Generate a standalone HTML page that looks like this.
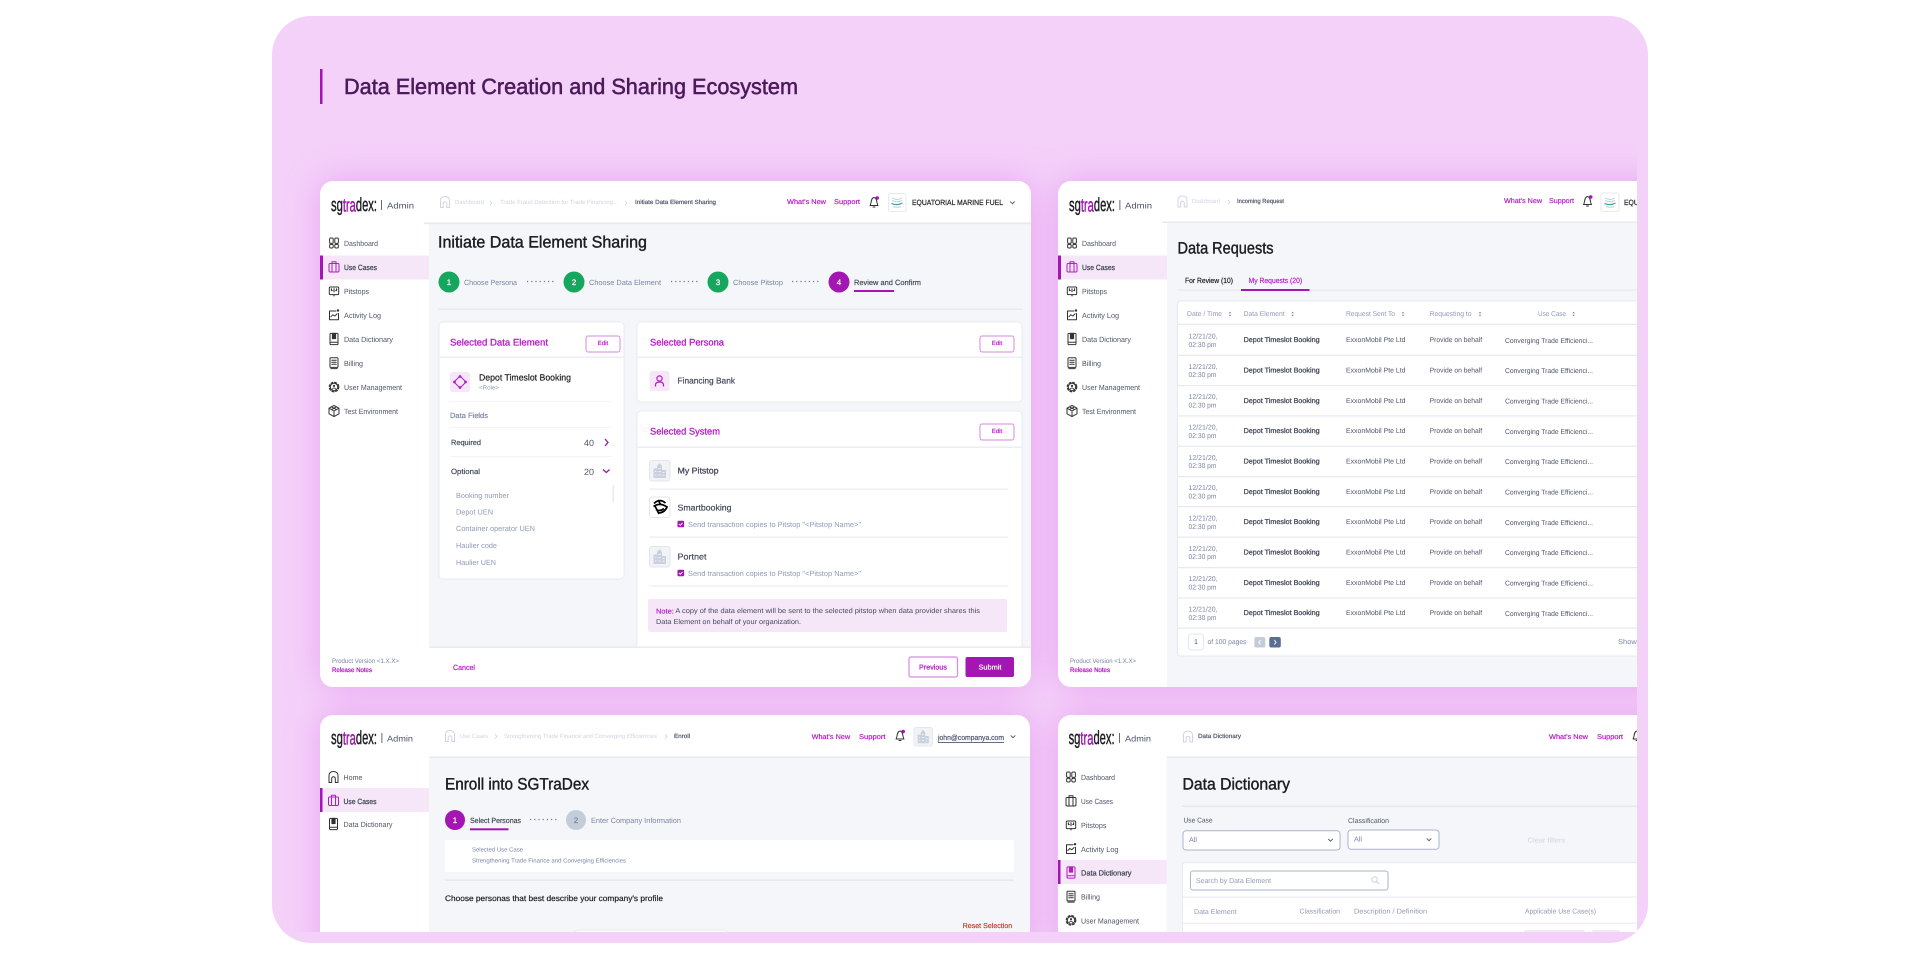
<!DOCTYPE html>
<html lang="en"><head><meta charset="utf-8"><title>Data Element Creation and Sharing Ecosystem</title>
<style>
html,body{margin:0;padding:0;background:#fff;width:1920px;height:959px;overflow:hidden}
svg{display:block}
text{font-family:"Liberation Sans",sans-serif;dominant-baseline:central;white-space:pre;stroke-width:0;transform:translateY(.6px);text-rendering:geometricPrecision}
.m{stroke-width:.2}
.b{stroke-width:.28}
.f16.m{stroke-width:.42}
.f95.m{stroke-width:.3;transform:translateY(1px)}
.lg{stroke-width:.45}
.lg tspan{stroke:#a313b2}
.p{fill:#b41cc4;stroke:#b41cc4}
.k{fill:#1c1c22;stroke:#1c1c22}
.d{fill:#444a5a;stroke:#444a5a}
.g{fill:#7a85a3;stroke:#7a85a3}
.l{fill:#8f9ab5;stroke:#8f9ab5}
.c{fill:#cfd5e2;stroke:#cfd5e2}
.s{fill:#4e5568;stroke:#4e5568}
.w{fill:#fff;stroke:#fff}
.f6{font-size:6px}.f65{font-size:6.5px}.f7{font-size:7px}.f75{font-size:7.5px}.f8{font-size:8px}.f85{font-size:8.5px}.f9{font-size:9px}.f95{font-size:9.5px}.f16{font-size:16.5px}
.ic{fill:none;stroke:currentColor;stroke-width:1;stroke-linejoin:round;stroke-linecap:round}
</style></head><body>
<svg width="1920" height="959" viewBox="0 0 1920 959" xmlns="http://www.w3.org/2000/svg">
<defs>
<filter id="sh" x="-20%" y="-20%" width="140%" height="140%"><feGaussianBlur stdDeviation="17"/></filter>
<filter id="bl" x="0" y="0" width="100%" height="100%"><feGaussianBlur stdDeviation="0.38"/></filter>
<clipPath id="ca"><path d="M310 16H1637V932H272V54A38 38 0 0 1 310 16Z"/></clipPath>
<clipPath id="c1"><rect x="320" y="181" width="711" height="506" rx="13"/></clipPath>
<clipPath id="c2"><rect x="1058" y="181" width="700" height="506" rx="13"/></clipPath>
<clipPath id="c3"><rect x="320" y="715" width="710" height="240" rx="13"/></clipPath>
<clipPath id="c4"><rect x="1058" y="715" width="700" height="240" rx="13"/></clipPath>
<g id="dash" class="ic"><rect x="-4.4" y="-5" width="3.6" height="5.4" rx="1.2"/><rect x=".8" y="-5" width="3.6" height="5.4" rx="1.2"/><rect x="-4.4" y="1.4" width="3.6" height="3.6" rx="1.2"/><rect x=".8" y="1.4" width="3.6" height="3.6" rx="1.2"/></g>
<g id="case" class="ic"><rect x="-5" y="-3.5" width="10" height="8.5" rx="1.2"/><path d="M-2 -3.5V5M2 -3.5V5M-2 -3.5V-5.2H2V-3.5"/></g>
<g id="pit" class="ic"><rect x="-4.7" y="-4" width="9.4" height="7.6" rx="1"/><path d="M-2.6 -2.2V-.4H-1.8M2.6 -2.2V-.4H1.8M0 -2.2V.8M0 3.6V5" stroke-width="1.1"/></g>
<g id="log" class="ic"><path d="M2 -4H-4.5V4.8H4.5V-1.5"/><path d="M-3.2 1.8L-1.2 -.2L.8 1L3.2 -1.2"/><circle cx="4" cy="-4.5" r="1.2" fill="currentColor" stroke="none"/></g>
<g id="dict" class="ic"><rect x="-4" y="-5.6" width="8" height="11.2" rx="1"/><path d="M-4 3.2H4"/><rect x="-1.6" y="-5.6" width="3.2" height="5.2" fill="currentColor"/></g>
<g id="bill" class="ic"><rect x="-4" y="-5.2" width="8" height="9.6" rx=".8"/><path d="M-2.2 -2.8H2.2M-2.2 -.8H2.2M-2.2 1.2H2.2M-3.2 5.6H3.2"/></g>
<g id="user" class="ic"><circle r="3.7" stroke-width="1"/><circle r="4.7" stroke-width="1.3" stroke-dasharray="1.8 2"/><circle cy="-1.1" r="1.1" fill="currentColor" stroke="none"/><path d="M-1.8 2.2Q0 -.4 1.8 2.2" stroke-width=".9"/></g>
<g id="test" class="ic" stroke-width="1.15"><path d="M0 -5.6L5 -2.8V2.8L0 5.6L-5 2.8V-2.8Z M-5 -2.8L0 0L5 -2.8M0 0V5.6M-2.5 -4.2L2.5 -1.4M2.5 -4.2L-2.5 -1.4"/></g>
<g id="home" class="ic"><path d="M-4.5 5.5V-1Q-4.5 -5.5 0 -5.5Q4.5 -5.5 4.5 -1V5.5H1.8V1.5A1.8 1.8 0 0 0 -1.8 1.5V5.5Z"/></g>
<g id="bell" class="ic"><path d="M-4 3.5C-2.5 2 -3.5 -4 0 -4.5C3.5 -4 2.5 2 4 3.5Z"/><path d="M-1 5H1"/><circle cx="3.2" cy="-4" r="1.8" fill="#a313b2" stroke="none"/></g>
<g id="bld"><rect x="-10" y="-10" width="20.5" height="20.5" rx="2.5" fill="#f1f3f7" stroke="#e3e6ee"/><path d="M-6 7.5V-2H-2.5V-4.5L0 -7.5L2.5 -4.5V-.5H6.5V7.5Z" fill="#c9d1df"/><path d="M-4.5 1H-3M-1 1H1M3 2H5M-4.5 4.5H-3M-1 4.5H1M3 4.8H5M-1 -2H1" stroke="#f1f3f7"/></g>
<g id="edit"><rect x="0" y="0" width="34" height="16" rx="2" fill="#fff" stroke="#d98ae4" stroke-width="1"/></g>
<g id="sort"><path d="M-1.3 -.7L0 -2.4L1.3 -.7ZM-1.3 .7L0 2.4L1.3 .7Z" fill="#7a85a3"/></g>
<g id="chev"><path d="M-2.3 -1.1L0 1.2L2.3 -1.1" fill="none" stroke="#555" stroke-width=".9"/></g>
<g id="crumb"><path d="M-1 -2.2L1 0L-1 2.2" fill="none" stroke="#c3cadb" stroke-width=".7"/></g>
<g id="chk"><rect x="0" y="-3.3" width="6.6" height="6.6" rx="1" fill="#a313b2"/><path d="M1.5 0L2.8 1.3L5.1 -1.1" fill="none" stroke="#fff" stroke-width=".9"/></g>
</defs>

<rect width="1920" height="959" fill="#fff"/>
<rect x="272" y="16" width="1376" height="927" rx="39" fill="#f4d1f9"/>
<rect x="320" y="69" width="2.5" height="35" fill="#a313b2"/>
<text x="344" y="86" font-size="22" fill="#4b1a5b" stroke="#4b1a5b" style="stroke-width:.55" textLength="454" lengthAdjust="spacingAndGlyphs">Data Element Creation and Sharing Ecosystem</text>

<g clip-path="url(#ca)">
<g filter="url(#sh)" fill="#df7fee" opacity=".55">
<rect x="320" y="181" width="711" height="506" rx="13"/>
<rect x="1058" y="181" width="700" height="506" rx="13"/>
<rect x="320" y="715" width="710" height="240" rx="13"/>
<rect x="1058" y="715" width="700" height="240" rx="13"/>
</g>

<g filter="url(#bl)">
<!-- CARD 1 -->
<g clip-path="url(#c1)">
<rect x="320" y="181" width="711" height="506" fill="#fff"/>
<rect x="429" y="224" width="602" height="424" fill="#f5f6f9"/>
<rect x="424" y="222.5" width="607" height="1.6" fill="#e6e9f0"/>
<text x="331" y="205" font-size="19" class="k lg" textLength="46" lengthAdjust="spacingAndGlyphs">sg<tspan fill="#a313b2">tra</tspan>dex:</text>
<rect x="381" y="200" width=".8" height="10" fill="#444"/>
<text x="387" y="205" class="f85 s" textLength="27" lengthAdjust="spacingAndGlyphs">Admin</text>
<rect x="320" y="255.5" width="109" height="24" fill="#f5e6f8"/><rect x="320" y="255.5" width="3" height="24" fill="#a313b2"/>
<use href="#dash" x="334" y="243" color="#333"/><text x="344" y="243" class="f75 s" textLength="34" lengthAdjust="spacingAndGlyphs">Dashboard</text>
<use href="#case" x="334" y="267" color="#b41cc4"/><text x="344" y="267" class="f75 d b" textLength="33" lengthAdjust="spacingAndGlyphs">Use Cases</text>
<use href="#pit" x="334" y="291" color="#333"/><text x="344" y="291" class="f75 s" textLength="25" lengthAdjust="spacingAndGlyphs">Pitstops</text>
<use href="#log" x="334" y="315" color="#333"/><text x="344" y="315" class="f75 s" textLength="37" lengthAdjust="spacingAndGlyphs">Activity Log</text>
<use href="#dict" x="334" y="339" color="#333"/><text x="344" y="339" class="f75 s" textLength="49" lengthAdjust="spacingAndGlyphs">Data Dictionary</text>
<use href="#bill" x="334" y="363" color="#333"/><text x="344" y="363" class="f75 s" textLength="19" lengthAdjust="spacingAndGlyphs">Billing</text>
<use href="#user" x="334" y="387" color="#333"/><text x="344" y="387" class="f75 s" textLength="58" lengthAdjust="spacingAndGlyphs">User Management</text>
<use href="#test" x="334" y="411" color="#333"/><text x="344" y="411" class="f75 s" textLength="54" lengthAdjust="spacingAndGlyphs">Test Environment</text>
<text x="332" y="661" class="f65 g" textLength="67" lengthAdjust="spacingAndGlyphs">Product Version &lt;1.X.X&gt;</text>
<text x="332" y="670" class="f65 p b" textLength="40" lengthAdjust="spacingAndGlyphs">Release Notes</text>

<use href="#home" x="445" y="202" color="#cfd5e2"/>
<text x="455" y="202.5" class="f6 c" textLength="29" lengthAdjust="spacingAndGlyphs">Dashboard</text><use href="#crumb" x="491" y="203"/>
<text x="500" y="202.5" class="f6 c" textLength="118" lengthAdjust="spacingAndGlyphs">Trade Fraud Detection for Trade Financing...</text><use href="#crumb" x="626" y="203"/>
<text x="635" y="202.5" class="f6 s m" textLength="81" lengthAdjust="spacingAndGlyphs">Initiate Data Element Sharing</text>
<text x="787" y="202" class="f7 p m" textLength="39" lengthAdjust="spacingAndGlyphs">What's New</text>
<text x="834" y="202" class="f7 p m" textLength="26" lengthAdjust="spacingAndGlyphs">Support</text>
<use href="#bell" x="874" y="202" color="#333"/>
<rect x="888.5" y="193.5" width="17.5" height="18" rx="2" fill="#fff" stroke="#e6e9f0"/>
<path d="M892 198Q897 201 902 198M892 200.5Q897 203 902 200.5" stroke="#c9cfd8" fill="none"/><path d="M891.5 203.5Q897 206 902.5 203" stroke="#2aa6a8" fill="none" stroke-width="1.2"/><path d="M893 206.5Q897 208 901 206.5" stroke="#c9cfd8" fill="none"/>
<text x="912" y="202" class="f75 k m" textLength="91" lengthAdjust="spacingAndGlyphs">EQUATORIAL MARINE FUEL</text>
<use href="#chev" x="1012.5" y="202.5"/>

<text x="438" y="242" class="f16 k m" textLength="209" lengthAdjust="spacingAndGlyphs">Initiate Data Element Sharing</text>
<circle cx="449" cy="282" r="10.5" fill="#12a75f"/><text x="449" y="282" text-anchor="middle" class="f8 w m">1</text>
<text x="464" y="282" class="f75 g" textLength="53" lengthAdjust="spacingAndGlyphs">Choose Persona</text>
<path d="M527 281.5H556" stroke="#67749a" stroke-width="1.2" stroke-dasharray="1.2 3"/>
<circle cx="574" cy="282" r="10.5" fill="#12a75f"/><text x="574" y="282" text-anchor="middle" class="f8 w m">2</text>
<text x="589" y="282" class="f75 g" textLength="72" lengthAdjust="spacingAndGlyphs">Choose Data Element</text>
<path d="M671 281.5H700" stroke="#67749a" stroke-width="1.2" stroke-dasharray="1.2 3"/>
<circle cx="718" cy="282" r="10.5" fill="#12a75f"/><text x="718" y="282" text-anchor="middle" class="f8 w m">3</text>
<text x="733" y="282" class="f75 g" textLength="50" lengthAdjust="spacingAndGlyphs">Choose Pitstop</text>
<path d="M792 281.5H821" stroke="#67749a" stroke-width="1.2" stroke-dasharray="1.2 3"/>
<circle cx="839" cy="282" r="10.5" fill="#a313b2"/><text x="839" y="282" text-anchor="middle" class="f8 w m">4</text>
<text x="854" y="282" class="f75 d m" textLength="67" lengthAdjust="spacingAndGlyphs">Review and Confirm</text>
<rect x="854" y="290" width="40" height="2" fill="#a313b2"/>
<rect x="438" y="308.5" width="585" height="1.4" fill="#e6e9ef"/>

<!-- left panel -->
<rect x="439" y="322" width="185" height="257" rx="4" fill="#fff" stroke="#e8ebf1"/>
<text x="450" y="342" class="f95 p m" textLength="98" lengthAdjust="spacingAndGlyphs">Selected Data Element</text>
<use href="#edit" x="586" y="336"/><text x="603" y="343.5" text-anchor="middle" class="f6 p m">Edit</text>
<rect x="439" y="356.5" width="185" height="1.6" fill="#eceef3"/>
<rect x="450" y="372" width="20" height="20" rx="3" fill="#f5e6f8"/>
<path d="M460 376L466 382L460 388L454 382Z" fill="none" stroke="#b41cc4" stroke-width="1"/><circle cx="460" cy="376.5" r="1.4" fill="#b41cc4"/><circle cx="460" cy="387.5" r="1.4" fill="#b41cc4"/><circle cx="454.5" cy="382" r="1.4" fill="#b41cc4"/><circle cx="465.5" cy="382" r="1.4" fill="#b41cc4"/>
<text x="479" y="377" class="f9 k m" textLength="92" lengthAdjust="spacingAndGlyphs">Depot Timeslot Booking</text>
<text x="479" y="388" class="f6 l" textLength="20" lengthAdjust="spacingAndGlyphs">&lt;Role&gt;</text>
<rect x="450" y="401" width="162" height="1" fill="#f3f4f8"/>
<text x="450" y="415" class="f75 g m" textLength="38" lengthAdjust="spacingAndGlyphs">Data Fields</text>
<rect x="450" y="427" width="162" height="1" fill="#f3f4f8"/>
<text x="451" y="442" class="f75 d m" textLength="30" lengthAdjust="spacingAndGlyphs">Required</text>
<text x="584" y="442.5" class="f9 s" textLength="10" lengthAdjust="spacingAndGlyphs">40</text>
<path d="M605 439L608 442.5L605 446" fill="none" stroke="#a313b2" stroke-width="1.3"/>
<rect x="450" y="456" width="162" height="1" fill="#f3f4f8"/>
<text x="451" y="471" class="f75 d m" textLength="29" lengthAdjust="spacingAndGlyphs">Optional</text>
<text x="584" y="471.5" class="f9 s" textLength="10" lengthAdjust="spacingAndGlyphs">20</text>
<path d="M603 469.5L606.3 472.5L609.5 469.5" fill="none" stroke="#a313b2" stroke-width="1.3"/>
<text x="456" y="495" class="f75 l" textLength="53" lengthAdjust="spacingAndGlyphs">Booking number</text>
<text x="456" y="511.5" class="f75 l" textLength="37" lengthAdjust="spacingAndGlyphs">Depot UEN</text>
<text x="456" y="528" class="f75 l" textLength="79" lengthAdjust="spacingAndGlyphs">Container operator UEN</text>
<text x="456" y="545" class="f75 l" textLength="41" lengthAdjust="spacingAndGlyphs">Haulier code</text>
<text x="456" y="562" class="f75 l" textLength="40" lengthAdjust="spacingAndGlyphs">Haulier UEN</text>
<rect x="612.5" y="485" width="1.6" height="17" fill="#e8ebf1"/>

<!-- persona -->
<rect x="637" y="322" width="385" height="80" rx="4" fill="#fff" stroke="#e8ebf1"/>
<text x="650" y="342" class="f95 p m" textLength="74" lengthAdjust="spacingAndGlyphs">Selected Persona</text>
<use href="#edit" x="980" y="336"/><text x="997" y="343.5" text-anchor="middle" class="f6 p m">Edit</text>
<rect x="637" y="356.5" width="385" height="1.6" fill="#eceef3"/>
<rect x="649.5" y="371" width="20" height="20" rx="3" fill="#f5e6f8"/>
<circle cx="659.5" cy="378.5" r="2.6" fill="none" stroke="#b41cc4" stroke-width="1.2"/><path d="M655.5 386.5V385Q655.5 382 659.5 382Q663.5 382 663.5 385V386.5" fill="none" stroke="#b41cc4" stroke-width="1.2"/>
<text x="677.5" y="380" class="f85 d m" textLength="57.5" lengthAdjust="spacingAndGlyphs">Financing Bank</text>

<!-- system -->
<rect x="637" y="411" width="385" height="260" rx="4" fill="#fff" stroke="#e8ebf1"/>
<text x="650" y="431" class="f95 p m" textLength="70" lengthAdjust="spacingAndGlyphs">Selected System</text>
<use href="#edit" x="980" y="424"/><text x="997" y="431.5" text-anchor="middle" class="f6 p m">Edit</text>
<rect x="637" y="446.5" width="385" height="1.6" fill="#eceef3"/>
<use href="#bld" x="659.5" y="470.5"/>
<text x="677.5" y="470" class="f85 d b" textLength="41" lengthAdjust="spacingAndGlyphs">My Pitstop</text>
<rect x="649" y="488.5" width="359" height="1.2" fill="#eceef3"/>
<rect x="649.5" y="497" width="20.5" height="20.5" rx="2.5" fill="#fff" stroke="#e3e6ee"/>
<path d="M654 503.5Q659.5 498 665.5 503M653.5 506.5Q660 502 667 507Q664.5 513 658 513M656 509.5Q660 512 664 508.5M658 500L661 505M655 506L659 514" fill="none" stroke="#000" stroke-width="1.7"/>
<text x="677.5" y="507" class="f85 d m" textLength="54" lengthAdjust="spacingAndGlyphs">Smartbooking</text>
<use href="#chk" x="677.5" y="524"/>
<text x="688" y="524" class="f75 l" textLength="173" lengthAdjust="spacingAndGlyphs">Send transaction copies to Pitstop "&lt;Pitstop Name&gt;"</text>
<rect x="649" y="536.5" width="359" height="1.2" fill="#eceef3"/>
<use href="#bld" x="659.5" y="556.5"/>
<text x="677.5" y="556" class="f85 d m" textLength="29" lengthAdjust="spacingAndGlyphs">Portnet</text>
<use href="#chk" x="677.5" y="573"/>
<text x="688" y="573" class="f75 l" textLength="173" lengthAdjust="spacingAndGlyphs">Send transaction copies to Pitstop "&lt;Pitstop Name&gt;"</text>
<rect x="649" y="585.5" width="359" height="1.2" fill="#eceef3"/>
<rect x="648" y="599" width="359" height="33" rx="2" fill="#f5e6f8"/>
<text x="656" y="611" class="f7 d" textLength="324" lengthAdjust="spacingAndGlyphs"><tspan class="p m">Note:</tspan> A copy of the data element will be sent to the selected pitstop when data provider shares this</text>
<text x="656" y="622" class="f7 d" textLength="145" lengthAdjust="spacingAndGlyphs">Data Element on behalf of your organization.</text>

<!-- footer -->
<rect x="429" y="647" width="602" height="40" fill="#fff"/>
<rect x="429" y="646.5" width="602" height="1.4" fill="#e6e9f0"/>
<text x="453" y="667" class="f75 p m" textLength="22" lengthAdjust="spacingAndGlyphs">Cancel</text>
<rect x="909" y="657" width="48.5" height="20" rx="2" fill="#fff" stroke="#d98ae4" stroke-width="1.2"/>
<text x="933" y="667.5" text-anchor="middle" class="f7 p b" textLength="28" lengthAdjust="spacingAndGlyphs">Previous</text>
<rect x="965.5" y="657" width="48.5" height="20" rx="2" fill="#a313b2"/>
<text x="990" y="667.5" text-anchor="middle" class="f7 w m" textLength="23" lengthAdjust="spacingAndGlyphs">Submit</text>
</g>

<!-- CARD 2 -->
<g clip-path="url(#c2)">
<rect x="1058" y="181" width="700" height="506" fill="#fff"/>
<rect x="1167" y="223" width="590" height="464" fill="#f5f6f9"/>
<rect x="1162" y="221.5" width="590" height="1.4" fill="#e6e9f0"/>
<text x="1069" y="205" font-size="19" class="k lg" textLength="46" lengthAdjust="spacingAndGlyphs">sg<tspan fill="#a313b2">tra</tspan>dex:</text>
<rect x="1119.5" y="200" width=".8" height="10" fill="#444"/>
<text x="1125" y="205" class="f85 s" textLength="27" lengthAdjust="spacingAndGlyphs">Admin</text>
<rect x="1058" y="255.5" width="109" height="24" fill="#f5e6f8"/><rect x="1058" y="255.5" width="3" height="24" fill="#a313b2"/>
<use href="#dash" x="1072" y="243" color="#333"/><text x="1082" y="243" class="f75 s" textLength="34" lengthAdjust="spacingAndGlyphs">Dashboard</text>
<use href="#case" x="1072" y="267" color="#b41cc4"/><text x="1082" y="267" class="f75 d b" textLength="33" lengthAdjust="spacingAndGlyphs">Use Cases</text>
<use href="#pit" x="1072" y="291" color="#333"/><text x="1082" y="291" class="f75 s" textLength="25" lengthAdjust="spacingAndGlyphs">Pitstops</text>
<use href="#log" x="1072" y="315" color="#333"/><text x="1082" y="315" class="f75 s" textLength="37" lengthAdjust="spacingAndGlyphs">Activity Log</text>
<use href="#dict" x="1072" y="339" color="#333"/><text x="1082" y="339" class="f75 s" textLength="49" lengthAdjust="spacingAndGlyphs">Data Dictionary</text>
<use href="#bill" x="1072" y="363" color="#333"/><text x="1082" y="363" class="f75 s" textLength="19" lengthAdjust="spacingAndGlyphs">Billing</text>
<use href="#user" x="1072" y="387" color="#333"/><text x="1082" y="387" class="f75 s" textLength="58" lengthAdjust="spacingAndGlyphs">User Management</text>
<use href="#test" x="1072" y="411" color="#333"/><text x="1082" y="411" class="f75 s" textLength="54" lengthAdjust="spacingAndGlyphs">Test Environment</text>
<text x="1070" y="661" class="f65 g" textLength="66" lengthAdjust="spacingAndGlyphs">Product Version &lt;1.X.X&gt;</text>
<text x="1070" y="670" class="f65 p b" textLength="40" lengthAdjust="spacingAndGlyphs">Release Notes</text>

<use href="#home" x="1182.5" y="201.5" color="#cfd5e2"/>
<text x="1192" y="201.5" class="f6 c" textLength="28" lengthAdjust="spacingAndGlyphs">Dashboard</text><use href="#crumb" x="1229" y="202"/>
<text x="1237" y="201.5" class="f6 s m" textLength="47" lengthAdjust="spacingAndGlyphs">Incoming Request</text>
<text x="1504" y="201" class="f7 p m" textLength="38" lengthAdjust="spacingAndGlyphs">What's New</text>
<text x="1549" y="201" class="f7 p m" textLength="25" lengthAdjust="spacingAndGlyphs">Support</text>
<use href="#bell" x="1587.5" y="201" color="#333"/>
<rect x="1601" y="193" width="18" height="18.5" rx="2" fill="#fff" stroke="#e6e9f0"/>
<path d="M1605 198Q1610 201 1615 198M1605 200.5Q1610 203 1615 200.5" stroke="#c9cfd8" fill="none"/><path d="M1604.5 203.5Q1610 206 1615.5 203" stroke="#2aa6a8" fill="none" stroke-width="1.2"/><path d="M1606 206.5Q1610 208 1614 206.5" stroke="#c9cfd8" fill="none"/>
<text x="1624" y="202" class="f75 k m" textLength="91" lengthAdjust="spacingAndGlyphs">EQUATORIAL MARINE FUEL</text>

<text x="1177.5" y="248" class="f16 k m" textLength="96" lengthAdjust="spacingAndGlyphs">Data Requests</text>
<text x="1185" y="280" class="f75 k m" textLength="48" lengthAdjust="spacingAndGlyphs">For Review (10)</text>
<text x="1248.6" y="280" class="f75 p m" textLength="53.5" lengthAdjust="spacingAndGlyphs">My Requests (20)</text>
<rect x="1177" y="289.5" width="470" height="1.4" fill="#e8eaf0"/>
<rect x="1241" y="289" width="68.5" height="2" fill="#a313b2"/>

<rect x="1177.5" y="301" width="500" height="355" rx="3" fill="#fff" stroke="#e6e9f0"/>
<text x="1187" y="314" class="f7 l" textLength="35" lengthAdjust="spacingAndGlyphs">Date / Time</text><use href="#sort" x="1230" y="314"/>
<text x="1243.6" y="314" class="f7 l" textLength="41" lengthAdjust="spacingAndGlyphs">Data Element</text><use href="#sort" x="1292.6" y="314"/>
<text x="1346" y="314" class="f7 l" textLength="49" lengthAdjust="spacingAndGlyphs">Request Sent To</text><use href="#sort" x="1403" y="314"/>
<text x="1429.6" y="314" class="f7 l" textLength="42" lengthAdjust="spacingAndGlyphs">Requesting to</text><use href="#sort" x="1480" y="314"/>
<text x="1538" y="314" class="f7 l" textLength="28" lengthAdjust="spacingAndGlyphs">Use Case</text><use href="#sort" x="1573.6" y="314"/>
<g fill="#e6e9f0">
<rect x="1177.5" y="323.7" width="470" height="1.2"/><rect x="1177.5" y="354.7" width="470" height="1.2"/><rect x="1177.5" y="385" width="470" height="1.2"/><rect x="1177.5" y="415.3" width="470" height="1.2"/><rect x="1177.5" y="445.6" width="470" height="1.2"/><rect x="1177.5" y="476" width="470" height="1.2"/><rect x="1177.5" y="506" width="470" height="1.2"/><rect x="1177.5" y="536.5" width="470" height="1.2"/><rect x="1177.5" y="567" width="470" height="1.2"/><rect x="1177.5" y="597.4" width="470" height="1.2"/><rect x="1177.5" y="627.5" width="470" height="1.2"/>
</g>
<g transform="translate(0,.4)"><text x="1188.5" y="336" class="f7 g" textLength="29" lengthAdjust="spacingAndGlyphs">12/21/20,</text><text x="1188.5" y="344.3" class="f7 g" textLength="28" lengthAdjust="spacingAndGlyphs">02:30 pm</text><text x="1243.6" y="339.7" class="f7 d b" textLength="76" lengthAdjust="spacingAndGlyphs">Depot Timeslot Booking</text><text x="1346" y="339.7" class="f7 s" textLength="59.5" lengthAdjust="spacingAndGlyphs">ExxonMobil Pte Ltd</text><text x="1429.6" y="339.7" class="f7 s" textLength="52.5" lengthAdjust="spacingAndGlyphs">Provide on behalf</text><text x="1505" y="340.3" class="f7 s" textLength="88" lengthAdjust="spacingAndGlyphs">Converging Trade Efficienci...</text></g>
<g transform="translate(0,30.7)"><text x="1188.5" y="336" class="f7 g" textLength="29" lengthAdjust="spacingAndGlyphs">12/21/20,</text><text x="1188.5" y="344.3" class="f7 g" textLength="28" lengthAdjust="spacingAndGlyphs">02:30 pm</text><text x="1243.6" y="339.7" class="f7 d b" textLength="76" lengthAdjust="spacingAndGlyphs">Depot Timeslot Booking</text><text x="1346" y="339.7" class="f7 s" textLength="59.5" lengthAdjust="spacingAndGlyphs">ExxonMobil Pte Ltd</text><text x="1429.6" y="339.7" class="f7 s" textLength="52.5" lengthAdjust="spacingAndGlyphs">Provide on behalf</text><text x="1505" y="340.3" class="f7 s" textLength="88" lengthAdjust="spacingAndGlyphs">Converging Trade Efficienci...</text></g>
<g transform="translate(0,61)"><text x="1188.5" y="336" class="f7 g" textLength="29" lengthAdjust="spacingAndGlyphs">12/21/20,</text><text x="1188.5" y="344.3" class="f7 g" textLength="28" lengthAdjust="spacingAndGlyphs">02:30 pm</text><text x="1243.6" y="339.7" class="f7 d b" textLength="76" lengthAdjust="spacingAndGlyphs">Depot Timeslot Booking</text><text x="1346" y="339.7" class="f7 s" textLength="59.5" lengthAdjust="spacingAndGlyphs">ExxonMobil Pte Ltd</text><text x="1429.6" y="339.7" class="f7 s" textLength="52.5" lengthAdjust="spacingAndGlyphs">Provide on behalf</text><text x="1505" y="340.3" class="f7 s" textLength="88" lengthAdjust="spacingAndGlyphs">Converging Trade Efficienci...</text></g>
<g transform="translate(0,91.4)"><text x="1188.5" y="336" class="f7 g" textLength="29" lengthAdjust="spacingAndGlyphs">12/21/20,</text><text x="1188.5" y="344.3" class="f7 g" textLength="28" lengthAdjust="spacingAndGlyphs">02:30 pm</text><text x="1243.6" y="339.7" class="f7 d b" textLength="76" lengthAdjust="spacingAndGlyphs">Depot Timeslot Booking</text><text x="1346" y="339.7" class="f7 s" textLength="59.5" lengthAdjust="spacingAndGlyphs">ExxonMobil Pte Ltd</text><text x="1429.6" y="339.7" class="f7 s" textLength="52.5" lengthAdjust="spacingAndGlyphs">Provide on behalf</text><text x="1505" y="340.3" class="f7 s" textLength="88" lengthAdjust="spacingAndGlyphs">Converging Trade Efficienci...</text></g>
<g transform="translate(0,121.7)"><text x="1188.5" y="336" class="f7 g" textLength="29" lengthAdjust="spacingAndGlyphs">12/21/20,</text><text x="1188.5" y="344.3" class="f7 g" textLength="28" lengthAdjust="spacingAndGlyphs">02:30 pm</text><text x="1243.6" y="339.7" class="f7 d b" textLength="76" lengthAdjust="spacingAndGlyphs">Depot Timeslot Booking</text><text x="1346" y="339.7" class="f7 s" textLength="59.5" lengthAdjust="spacingAndGlyphs">ExxonMobil Pte Ltd</text><text x="1429.6" y="339.7" class="f7 s" textLength="52.5" lengthAdjust="spacingAndGlyphs">Provide on behalf</text><text x="1505" y="340.3" class="f7 s" textLength="88" lengthAdjust="spacingAndGlyphs">Converging Trade Efficienci...</text></g>
<g transform="translate(0,152)"><text x="1188.5" y="336" class="f7 g" textLength="29" lengthAdjust="spacingAndGlyphs">12/21/20,</text><text x="1188.5" y="344.3" class="f7 g" textLength="28" lengthAdjust="spacingAndGlyphs">02:30 pm</text><text x="1243.6" y="339.7" class="f7 d b" textLength="76" lengthAdjust="spacingAndGlyphs">Depot Timeslot Booking</text><text x="1346" y="339.7" class="f7 s" textLength="59.5" lengthAdjust="spacingAndGlyphs">ExxonMobil Pte Ltd</text><text x="1429.6" y="339.7" class="f7 s" textLength="52.5" lengthAdjust="spacingAndGlyphs">Provide on behalf</text><text x="1505" y="340.3" class="f7 s" textLength="88" lengthAdjust="spacingAndGlyphs">Converging Trade Efficienci...</text></g>
<g transform="translate(0,182.4)"><text x="1188.5" y="336" class="f7 g" textLength="29" lengthAdjust="spacingAndGlyphs">12/21/20,</text><text x="1188.5" y="344.3" class="f7 g" textLength="28" lengthAdjust="spacingAndGlyphs">02:30 pm</text><text x="1243.6" y="339.7" class="f7 d b" textLength="76" lengthAdjust="spacingAndGlyphs">Depot Timeslot Booking</text><text x="1346" y="339.7" class="f7 s" textLength="59.5" lengthAdjust="spacingAndGlyphs">ExxonMobil Pte Ltd</text><text x="1429.6" y="339.7" class="f7 s" textLength="52.5" lengthAdjust="spacingAndGlyphs">Provide on behalf</text><text x="1505" y="340.3" class="f7 s" textLength="88" lengthAdjust="spacingAndGlyphs">Converging Trade Efficienci...</text></g>
<g transform="translate(0,212.7)"><text x="1188.5" y="336" class="f7 g" textLength="29" lengthAdjust="spacingAndGlyphs">12/21/20,</text><text x="1188.5" y="344.3" class="f7 g" textLength="28" lengthAdjust="spacingAndGlyphs">02:30 pm</text><text x="1243.6" y="339.7" class="f7 d b" textLength="76" lengthAdjust="spacingAndGlyphs">Depot Timeslot Booking</text><text x="1346" y="339.7" class="f7 s" textLength="59.5" lengthAdjust="spacingAndGlyphs">ExxonMobil Pte Ltd</text><text x="1429.6" y="339.7" class="f7 s" textLength="52.5" lengthAdjust="spacingAndGlyphs">Provide on behalf</text><text x="1505" y="340.3" class="f7 s" textLength="88" lengthAdjust="spacingAndGlyphs">Converging Trade Efficienci...</text></g>
<g transform="translate(0,243)"><text x="1188.5" y="336" class="f7 g" textLength="29" lengthAdjust="spacingAndGlyphs">12/21/20,</text><text x="1188.5" y="344.3" class="f7 g" textLength="28" lengthAdjust="spacingAndGlyphs">02:30 pm</text><text x="1243.6" y="339.7" class="f7 d b" textLength="76" lengthAdjust="spacingAndGlyphs">Depot Timeslot Booking</text><text x="1346" y="339.7" class="f7 s" textLength="59.5" lengthAdjust="spacingAndGlyphs">ExxonMobil Pte Ltd</text><text x="1429.6" y="339.7" class="f7 s" textLength="52.5" lengthAdjust="spacingAndGlyphs">Provide on behalf</text><text x="1505" y="340.3" class="f7 s" textLength="88" lengthAdjust="spacingAndGlyphs">Converging Trade Efficienci...</text></g>
<g transform="translate(0,273.4)"><text x="1188.5" y="336" class="f7 g" textLength="29" lengthAdjust="spacingAndGlyphs">12/21/20,</text><text x="1188.5" y="344.3" class="f7 g" textLength="28" lengthAdjust="spacingAndGlyphs">02:30 pm</text><text x="1243.6" y="339.7" class="f7 d b" textLength="76" lengthAdjust="spacingAndGlyphs">Depot Timeslot Booking</text><text x="1346" y="339.7" class="f7 s" textLength="59.5" lengthAdjust="spacingAndGlyphs">ExxonMobil Pte Ltd</text><text x="1429.6" y="339.7" class="f7 s" textLength="52.5" lengthAdjust="spacingAndGlyphs">Provide on behalf</text><text x="1505" y="340.3" class="f7 s" textLength="88" lengthAdjust="spacingAndGlyphs">Converging Trade Efficienci...</text></g>
<rect x="1188.5" y="634" width="15" height="16" rx="2" fill="#fff" stroke="#e3e6ee"/>
<text x="1196" y="642" text-anchor="middle" class="f7 s">1</text>
<text x="1207.5" y="642" class="f7 g" textLength="39" lengthAdjust="spacingAndGlyphs">of 100 pages</text>
<rect x="1254.3" y="637" width="11" height="10.5" rx="2" fill="#c5ccd9"/><path d="M1260.5 640L1258.7 642.2L1260.5 644.5" fill="none" stroke="#fff" stroke-width=".9"/>
<rect x="1269.3" y="637" width="11.5" height="10.5" rx="2" fill="#5a6d92"/><path d="M1274.3 640L1276.1 642.2L1274.3 644.5" fill="none" stroke="#fff" stroke-width=".9"/>
<text x="1618" y="642" class="f7 g" textLength="46" lengthAdjust="spacingAndGlyphs">Showing 1-10</text>
</g>

<!-- CARD 3 -->
<g clip-path="url(#c3)">
<rect x="320" y="715" width="710" height="240" fill="#fff"/>
<rect x="429" y="758" width="601" height="197" fill="#f5f6f9"/>
<rect x="429" y="756.5" width="601" height="1.4" fill="#e6e9f0"/>
<text x="331" y="738" font-size="19" class="k lg" textLength="46" lengthAdjust="spacingAndGlyphs">sg<tspan fill="#a313b2">tra</tspan>dex:</text>
<rect x="381.5" y="733" width=".8" height="10" fill="#444"/>
<text x="387" y="738" class="f85 s" textLength="26" lengthAdjust="spacingAndGlyphs">Admin</text>
<rect x="320" y="788" width="109" height="24" fill="#f5e6f8"/><rect x="320" y="788" width="2.5" height="24" fill="#a313b2"/>
<use href="#home" x="333.5" y="777" color="#333"/><text x="343.5" y="777" class="f75 s" textLength="19" lengthAdjust="spacingAndGlyphs">Home</text>
<use href="#case" x="333.5" y="800.5" color="#b41cc4"/><text x="343.5" y="800.7" class="f75 d b" textLength="33" lengthAdjust="spacingAndGlyphs">Use Cases</text>
<use href="#dict" x="333.5" y="824" color="#333"/><text x="343.5" y="824" class="f75 s" textLength="49" lengthAdjust="spacingAndGlyphs">Data Dictionary</text>

<use href="#home" x="450" y="736" color="#cfd5e2"/>
<text x="460" y="736.5" class="f6 c" textLength="28" lengthAdjust="spacingAndGlyphs">Use Cases</text><use href="#crumb" x="496" y="736.5"/>
<text x="504" y="736.5" class="f6 c" textLength="153" lengthAdjust="spacingAndGlyphs">Strengthening Trade Finance and Converging Efficiencies</text><use href="#crumb" x="666" y="736.5"/>
<text x="674" y="736.5" class="f6 s m" textLength="16" lengthAdjust="spacingAndGlyphs">Enroll</text>
<text x="811.6" y="737" class="f7 p m" textLength="38.5" lengthAdjust="spacingAndGlyphs">What's New</text>
<text x="859" y="737" class="f7 p m" textLength="26.5" lengthAdjust="spacingAndGlyphs">Support</text>
<use href="#bell" x="900" y="735.5" color="#333"/>
<use href="#bld" transform="translate(923,736.5) scale(.9)"/>
<text x="938" y="737" class="f75 s m" textLength="66" lengthAdjust="spacingAndGlyphs" text-decoration="underline">john@companya.com</text>
<use href="#chev" x="1013" y="736.5"/>

<text x="445" y="784" class="f16 k m" textLength="144" lengthAdjust="spacingAndGlyphs">Enroll into SGTraDex</text>
<circle cx="455" cy="820" r="10" fill="#a313b2"/><text x="455" y="820" text-anchor="middle" class="f8 w m">1</text>
<text x="470" y="820" class="f75 d m" textLength="51" lengthAdjust="spacingAndGlyphs">Select Personas</text>
<rect x="470" y="828.3" width="38.5" height="2" fill="#a313b2"/>
<path d="M530 819.5H559" stroke="#67749a" stroke-width="1.2" stroke-dasharray="1.2 3"/>
<circle cx="576" cy="820" r="10" fill="#c5ccd9"/><text x="576" y="820" text-anchor="middle" class="f8 g m">2</text>
<text x="591" y="820" class="f75 g" textLength="90" lengthAdjust="spacingAndGlyphs">Enter Company Information</text>
<rect x="445" y="840" width="569" height="32" rx="2" fill="#fff"/>
<text x="472" y="850" class="f6 g" textLength="51" lengthAdjust="spacingAndGlyphs">Selected Use Case</text>
<text x="472" y="861" class="f6 g" textLength="154" lengthAdjust="spacingAndGlyphs">Strengthening Trade Finance and Converging Efficiencies</text>
<rect x="445" y="879.5" width="569" height="1.4" fill="#e3e6ee"/>
<text x="445" y="898" class="f8 k m" textLength="218" lengthAdjust="spacingAndGlyphs">Choose personas that best describe your company's profile</text>
<text x="962.7" y="925.7" class="f7" fill="#b8402a" stroke="#b8402a" style="stroke-width:.2" textLength="49.5" lengthAdjust="spacingAndGlyphs">Reset Selection</text>
<rect x="575" y="930" width="152" height="24" rx="3" fill="#fff" stroke="#e6e9f0"/>
</g>

<!-- CARD 4 -->
<g clip-path="url(#c4)">
<rect x="1058" y="715" width="700" height="240" fill="#fff"/>
<rect x="1166.6" y="758" width="590" height="197" fill="#f5f6f9"/>
<rect x="1166.6" y="756.5" width="590" height="1.4" fill="#e6e9f0"/>
<text x="1068.6" y="738" font-size="19" class="k lg" textLength="46" lengthAdjust="spacingAndGlyphs">sg<tspan fill="#a313b2">tra</tspan>dex:</text>
<rect x="1119" y="733" width=".8" height="10" fill="#444"/>
<text x="1125" y="738" class="f85 s" textLength="26" lengthAdjust="spacingAndGlyphs">Admin</text>
<rect x="1058" y="860" width="108.6" height="24" fill="#f5e6f8"/><rect x="1058" y="860" width="2.5" height="24" fill="#a313b2"/>
<use href="#dash" x="1071" y="777" color="#333"/><text x="1081" y="777" class="f75 s" textLength="34" lengthAdjust="spacingAndGlyphs">Dashboard</text>
<use href="#case" x="1071" y="801" color="#333"/><text x="1081" y="801" class="f75 s" textLength="32" lengthAdjust="spacingAndGlyphs">Use Cases</text>
<use href="#pit" x="1071" y="825" color="#333"/><text x="1081" y="825" class="f75 s" textLength="25.5" lengthAdjust="spacingAndGlyphs">Pitstops</text>
<use href="#log" x="1071" y="848.7" color="#333"/><text x="1081" y="848.7" class="f75 s" textLength="37.5" lengthAdjust="spacingAndGlyphs">Activity Log</text>
<use href="#dict" x="1071" y="872.5" color="#b41cc4"/><text x="1081" y="872.5" class="f75 d b" textLength="50.5" lengthAdjust="spacingAndGlyphs">Data Dictionary</text>
<use href="#bill" x="1071" y="896.5" color="#333"/><text x="1081" y="896.5" class="f75 s" textLength="19" lengthAdjust="spacingAndGlyphs">Billing</text>
<use href="#user" x="1071" y="920.3" color="#333"/><text x="1081" y="920.3" class="f75 s" textLength="58" lengthAdjust="spacingAndGlyphs">User Management</text>

<use href="#home" x="1188" y="736.5" color="#cfd5e2"/>
<text x="1198" y="736.5" class="f6 s m" textLength="43" lengthAdjust="spacingAndGlyphs">Data Dictionary</text>
<text x="1549" y="737" class="f7 p m" textLength="39" lengthAdjust="spacingAndGlyphs">What's New</text>
<text x="1597" y="737" class="f7 p m" textLength="26" lengthAdjust="spacingAndGlyphs">Support</text>
<use href="#bell" x="1637" y="735.5" color="#333"/>

<text x="1182.5" y="784" class="f16 k m" textLength="107.5" lengthAdjust="spacingAndGlyphs">Data Dictionary</text>
<rect x="1182" y="805.5" width="470" height="1.4" fill="#e3e6ee"/>
<text x="1183.5" y="820.5" class="f7 s" textLength="29" lengthAdjust="spacingAndGlyphs">Use Case</text>
<text x="1348" y="821" class="f7 s" textLength="41" lengthAdjust="spacingAndGlyphs">Classification</text>
<rect x="1183" y="830.7" width="157" height="19.3" rx="3" fill="#fff" stroke="#aab4c9" stroke-width="1"/>
<text x="1189" y="840" class="f7 g" textLength="8" lengthAdjust="spacingAndGlyphs">All</text><use href="#chev" x="1330.5" y="840"/>
<rect x="1348" y="830" width="91" height="19.3" rx="3" fill="#fff" stroke="#aab4c9" stroke-width="1"/>
<text x="1354" y="839.5" class="f7 g" textLength="8" lengthAdjust="spacingAndGlyphs">All</text><use href="#chev" x="1429" y="839.5"/>
<text x="1527.7" y="840.5" class="f7 c" textLength="37.5" lengthAdjust="spacingAndGlyphs">Clear filters</text>
<rect x="1182.5" y="862.7" width="500" height="90" rx="3" fill="#fff" stroke="#e6e9f0"/>
<rect x="1190.5" y="871" width="197.5" height="19" rx="2.5" fill="#fff" stroke="#aab4c9" stroke-width="1"/>
<text x="1196" y="881" class="f7 l" textLength="75" lengthAdjust="spacingAndGlyphs">Search by Data Element</text>
<circle cx="1374.5" cy="879.5" r="2.7" fill="none" stroke="#c5ccd9" stroke-width=".9"/><path d="M1376.5 881.5L1379 884" stroke="#c5ccd9" stroke-width=".9"/>
<rect x="1182.5" y="896.5" width="470" height="1.2" fill="#eceef3"/>
<text x="1194" y="911.8" class="f7 l" textLength="42.5" lengthAdjust="spacingAndGlyphs">Data Element</text>
<text x="1299.5" y="911.3" class="f7 l" textLength="40.5" lengthAdjust="spacingAndGlyphs">Classification</text>
<text x="1354" y="911.3" class="f7 l" textLength="73" lengthAdjust="spacingAndGlyphs">Description / Definition</text>
<text x="1525" y="911.3" class="f7 l" textLength="71" lengthAdjust="spacingAndGlyphs">Applicable Use Case(s)</text>
<rect x="1182.5" y="922.7" width="470" height="1.2" fill="#eceef3"/>
<rect x="1524" y="930" width="61" height="12" rx="2" fill="#f5e6f8"/>
<rect x="1592" y="930" width="28" height="12" rx="2" fill="#f5e6f8"/>
</g>
</g>
</g>
</svg>
</body></html>
